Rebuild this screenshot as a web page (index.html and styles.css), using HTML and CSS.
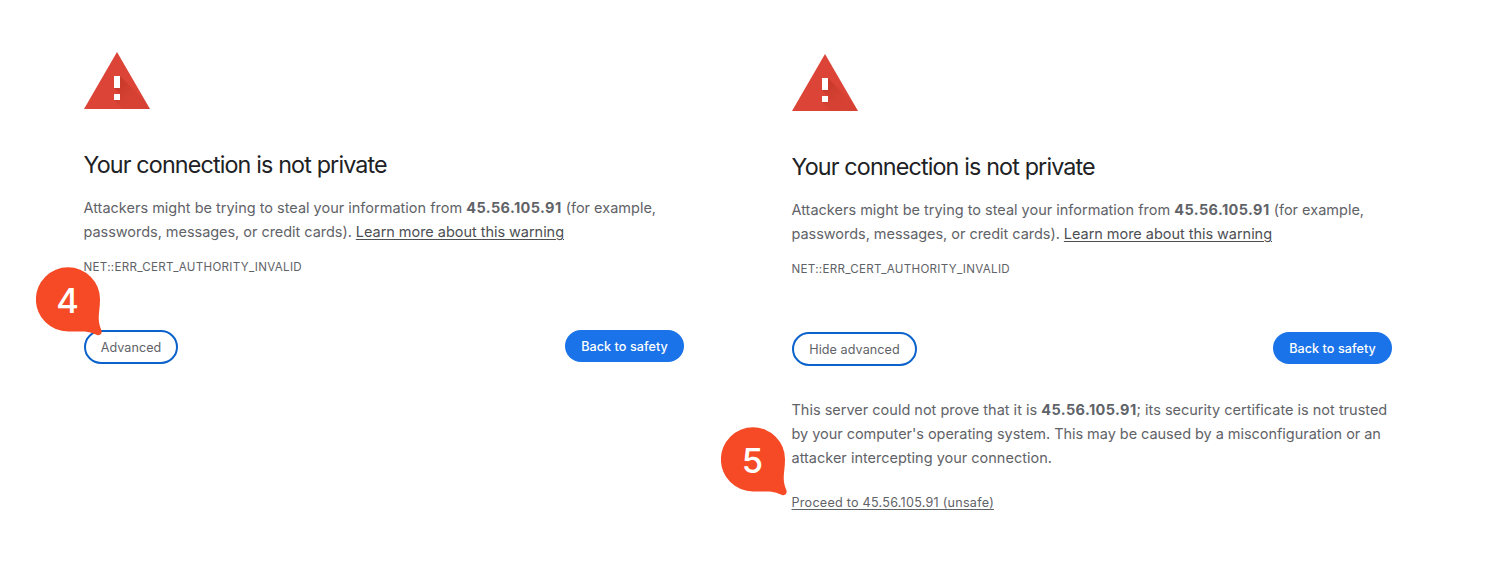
FILE: index.html
```html
<!DOCTYPE html>
<html lang="en">
<head>
<meta charset="utf-8">
<title>Privacy error</title>
<link rel="stylesheet" href="styles.css">
</head>
<body>
<svg class="defs" width="0" height="0" aria-hidden="true">
  <defs>
    <linearGradient id="shade" gradientUnits="userSpaceOnUse" x1="30" y1="36" x2="48" y2="54">
      <stop offset="0" stop-color="#a52714" stop-opacity=".34"/>
      <stop offset=".6" stop-color="#a52714" stop-opacity=".12"/>
      <stop offset="1" stop-color="#a52714" stop-opacity=".09"/>
    </linearGradient>
    <symbol id="warning" viewBox="0 0 66 57">
      <path fill="#db4437" d="M33 0 66 57H0z"/>
      <path fill="url(#shade)" d="M36 24 61.9 49.9 66 57H39L30 48V42h6l-6-6z"/>
      <path fill="#fff" d="M30 24h6v12h-6zM30 42h6v6h-6z"/>
    </symbol>
    <symbol id="bubble" viewBox="0 0 67 69">
      <path fill="#f54a25" d="M32 .3A32 32 0 0 1 64 32.4C64 40 62.7 46 62.7 51C62.7 56.5 64.2 59.8 65.4 63.2C66.6 66.5 64 69 61 67.9C56.5 66.2 53 64.5 46 64.5H32A32.1 32.1 0 0 1 32 .3z"/>
    </symbol>
  </defs>
</svg>
<main class="board">
  <section class="panel">
    <svg class="warning"><use href="#warning"/></svg>
    <h1>Your connection is not private</h1>
    <p class="copy">Attackers might be trying to steal your information from <b>45.56.105.91</b> (for example,<br><span class="tight">passwords, messages, or credit cards). <a href="#">Learn more about this warning</a></span></p>
    <div class="code">NET::ERR_CERT_AUTHORITY_INVALID</div>
    <div class="actions">
      <button class="outline short">Advanced</button>
      <button class="primary">Back to safety</button>
    </div>
    <div class="marker marker-four"><svg><use href="#bubble"/></svg><span>4</span></div>
  </section>
  <section class="panel second">
    <svg class="warning"><use href="#warning"/></svg>
    <h1>Your connection is not private</h1>
    <p class="copy">Attackers might be trying to steal your information from <b>45.56.105.91</b> (for example,<br><span class="tight">passwords, messages, or credit cards). <a href="#">Learn more about this warning</a></span></p>
    <div class="code">NET::ERR_CERT_AUTHORITY_INVALID</div>
    <div class="actions">
      <button class="outline long">Hide advanced</button>
      <button class="primary">Back to safety</button>
    </div>
    <p class="copy details">This server could not prove that it is <b>45.56.105.91</b>; its security certificate is not trusted<br><span class="tight">by your computer's operating system. This may be caused by a misconfiguration or an</span><br>attacker intercepting your connection.</p>
    <a class="proceed" href="#">Proceed to 45.56.105.91 (unsafe)</a>
    <div class="marker marker-five"><svg><use href="#bubble"/></svg><span>5</span></div>
  </section>
</main>
</body>
</html>
```
FILE: styles.css
```css
* { box-sizing: border-box; }
body { margin: 0; background: #fff; color: #5f6368; font-family: Inter, "Liberation Sans", sans-serif; }
.defs { display: block; }
.board { display: flex; gap: 108px; height: 573px; padding: 52px 0 0 84px; overflow: hidden; }
.panel { position: relative; flex: none; width: 600px; white-space: nowrap; }
.second { padding-top: 2px; }
.warning { display: block; width: 66px; height: 57px; }
h1 { margin: 41px 0 0 -.5px; color: #202124; font-size: 23.3px; line-height: 30px; font-weight: 400; letter-spacing: -.85px; }
.copy { margin: 16px 0 0 -.5px; font-size: 14.5px; line-height: 24px; letter-spacing: 0; }
.copy b { letter-spacing: .4px; }
.tight { letter-spacing: -.04px; }
.copy a { color: #4d4f53; text-underline-offset: 2px; }
.code { margin: 14px 0 0 -.5px; font-size: 11.6px; line-height: 18px; letter-spacing: .29px; }
.actions { display: flex; justify-content: space-between; align-items: flex-start; height: 34px; margin-top: 54px; }
button { padding: 1px 0 0; border-radius: 17px; font: 12.6px/20px Inter, "Liberation Sans", sans-serif; letter-spacing: .06px; }
.outline { height: 34px; border: 2px solid #0b62cb; background: #fff; color: #5f6368; }
.short { width: 94px; }
.long { width: 125px; }
.primary { width: 119px; height: 32px; border: 0; background: #1a73e8; color: #fff; font-weight: 500; }
.details { margin-top: 32px; }
.proceed { display: block; margin: 23px 0 0 -.5px; color: #5f6368; font-size: 12.6px; line-height: 20px; letter-spacing: .25px; text-underline-offset: 2px; }
.marker { position: absolute; width: 67px; height: 69px; }
.marker svg { display: block; width: 67px; height: 69px; }
.marker span { position: absolute; left: 0; top: 0; width: 63px; color: #fff; font-size: 34.5px; line-height: 67px; font-weight: 500; text-align: center; }
.marker-four { left: -48px; top: 215px; }
.marker-five { left: -71px; top: 375px; }
```
